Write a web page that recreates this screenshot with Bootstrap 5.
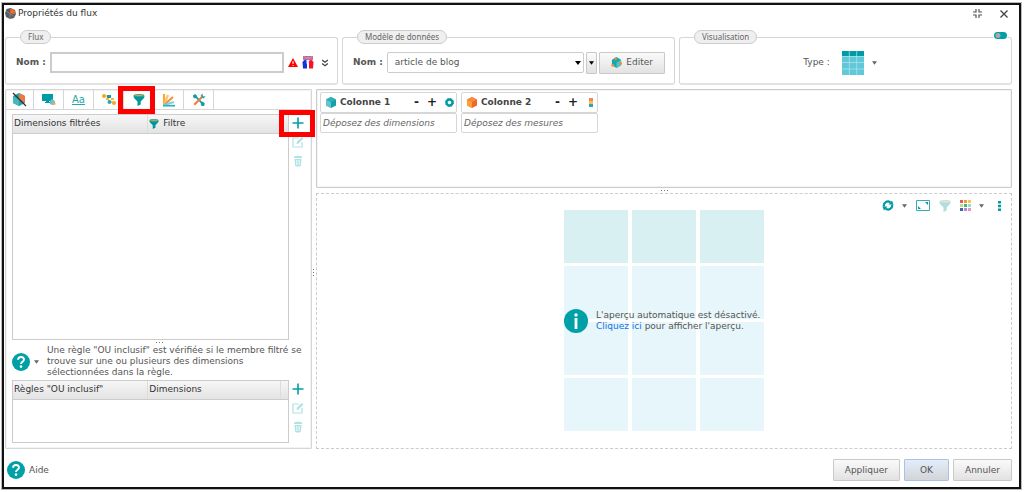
<!DOCTYPE html>
<html lang="fr">
<head>
<meta charset="utf-8">
<meta name="viewport" content="width=device-width, initial-scale=1">
<title>Propriétés du flux</title>
<link rel="stylesheet" href="https://cdn.jsdelivr.net/npm/bootstrap@5.3.0/dist/css/bootstrap.min.css">
<style>
:root{--teal:#00a0a6;--line:#d6d6d6;--ink:#555}
body{font:9px/11px "DejaVu Sans","Liberation Sans",sans-serif;color:var(--ink);background:#fff;padding:3px 3px 3px 2px}
button,input,select{font:inherit;color:inherit}
svg{display:block;flex:none}
a{color:#1473e6;text-decoration:none}
.window{min-height:calc(100vh - 6px);border:2px solid #111;outline:1px solid #bbb;padding:0 7px 6px 1px}
.titlebar{height:17px;padding-right:4px;gap:2px;color:#333}
.plain{border:0;background:none;padding:0;display:flex;align-items:center;justify-content:center}
.groups{display:grid;grid-template-columns:repeat(3,minmax(0,1fr));gap:4px;margin-top:8px}
.group{border:1px solid var(--line);border-bottom:2px solid #e2e2e2;border-radius:3px;padding:0 9px 9px 10px;position:relative;min-width:0}
.group legend{float:none;width:auto;margin:0 0 0 4px;padding:0 7px;height:14px;font:8px/12px "Noto Sans",sans-serif;color:#666;background:#efefef;border:1px solid #ccc;border-radius:7px}
.fields{height:30px;padding-top:7px}
.typed{padding-right:12px}
.field{height:21px;border:1px solid #c4c4c4;border-radius:0;padding:0 7px;background:#fff;min-width:0}
.field.name{border:2px solid #ccc}
.field.model{appearance:none;border-radius:2px;border-color:#ccc;background:#fff url("data:image/svg+xml,%3Csvg xmlns='http://www.w3.org/2000/svg' viewBox='0 0 6 4'%3E%3Cpath d='M0 0h6L3 4z'/%3E%3C/svg%3E") no-repeat right 2px center/6px 4px}
.pushbtn{border:1px solid #c9c9c9;border-radius:1px;background:linear-gradient(#fafafa,#e2e2e2);height:22px;padding:0 11px;display:flex;align-items:center;justify-content:center}
.pushbtn.main{background:linear-gradient(#e3edf9,#d2d5d9);border-color:#a9c3e2}
.pushbtn.more{width:11px;padding:0;margin:0 2px}
.switch{appearance:none;position:absolute;right:4px;top:-12px;width:13px;height:7px;border-radius:4px;margin:0;background:radial-gradient(circle at 4px 50%,#aaa 2px,transparent 3px),var(--teal);box-shadow:0 0 0 1px #fff}
.work{display:grid;grid-template-columns:307px minmax(0,1fr);gap:4px;margin-top:4px;position:relative}
.work>.d-flex{position:relative}
.panel{border:1px solid var(--line);border-radius:1px;box-shadow:inset 0 0 0 1px #f3f3f3}
.tabs{height:20px;border-bottom:1px solid var(--line)}
.tab{width:30px;border-right:1px solid var(--line);position:relative}
.tab:first-child{width:28px}
.sample{font-size:10px;color:#25a7ac}
.marked::after{content:"";position:absolute;z-index:3;border:5px solid red;pointer-events:none}
.tab.marked::after{inset:-4px -2px -5px -6px}
.addrow.marked::after{inset:-5px -8px -6px -10px}
.sidebody{padding:4px 4px 5px 6px}
.box{border:1px solid #ccc;min-width:0}
.box.rules{min-height:63px}
.listing{width:100%;table-layout:fixed;color:#333}
.listing th{height:18px;padding:0 1px;font-weight:400;background:linear-gradient(#f6f6f6,#e3e3e3);border-bottom:1px solid #ccc;border-right:1px solid #dcdcdc}
.listing th:first-child{width:49%}
.listing th.stub{width:8px}
.listing th:last-child{border-right:0}
.tools{width:18px;padding-top:1px;gap:3px}
.tools button{position:relative;height:16px;width:18px}
.off{opacity:.3}
.dots{height:5px;display:flex;gap:2px;align-items:center;justify-content:center}
.dots i{width:1px;height:1px;background:#777}
.dots.side{position:absolute;flex-direction:column;left:-3px;top:50%;height:auto}
.hint{padding-bottom:2px}
.columns{min-height:99px;padding:2px 3px;border-color:#ccc}
.colhead{height:21px;padding:0 2px 0 5px;border:1px solid var(--line);border-radius:2px;font-weight:700;color:#444}
.colhead>.tint{width:9px}
.drop{height:20px;line-height:18px;padding-left:2px;border:1px solid var(--line);border-radius:2px;font-style:italic;color:#666}
.column{width:137px}
.sign{font-size:12px;font-weight:700;color:#222}
.preview{border:1px dashed #ccc;min-height:255px;position:relative}
.viewtools{height:16px;padding:7px 9px 0 0;gap:9px}
.mosaic{display:grid;width:200px;grid-template-columns:repeat(3,1fr);grid-auto-rows:53px;gap:3px 4px;margin:0 auto}
.mosaic span{background:#e6f6fa}
.mosaic span:nth-child(-n+3){background:#d9f0f2}
.note{position:absolute;left:0;right:0;top:115px;width:200px;margin:auto;white-space:nowrap}
.footer{margin-top:10px;padding-left:2px}
.footer .pushbtn{min-width:45px}
</style>
</head>
<body>
<svg width="0" height="0" class="position-absolute" aria-hidden="true"><defs>
<symbol id="plus" viewBox="0 0 12 12"><path d="M6 .5v11M.5 6h11" stroke="#00a0a6" stroke-width="1.600"/></symbol>
<symbol id="edit" viewBox="0 0 12 12"><path d="M7 2H1v9h9V6" fill="none" stroke="#00a0a6" stroke-width="1.200"/><path d="M4.500 8l.5-2.500L10 1l1.500 1.500-5 5z" fill="#00a0a6"/></symbol>
<symbol id="bin" viewBox="0 0 10 12"><path d="M1 1.500q4-1.500 8 0V3H1zM1.500 4h7l-.7 7q-2.800 1.200-5.600 0z" fill="#00a0a6"/><path d="M3.500 5v5M5 5v5M6.500 5v5" stroke="#fff" stroke-width=".6"/></symbol>
<symbol id="funnel" viewBox="0 0 12 12"><path d="M.5 2Q6 3.500 11.500 2q0 1.500-1 2.500L7.700 7.500V10.500L4.500 12V7.500L1.500 4.500Q.5 3.500.5 2z" fill="#00979c"/><ellipse cx="6" cy="1.600" rx="5.200" ry="1.100" fill="#e6ab35" stroke="#00979c" stroke-width=".8"/></symbol>
<symbol id="caret" viewBox="0 0 6 4"><path d="M0 0h6L3 4z" fill="#666"/></symbol>
<symbol id="help" viewBox="0 0 18 18"><circle cx="9" cy="9" r="9" fill="#00a0a6"/><path d="M6 6.800Q6.200 4 9 4t3 2.500C12 8.700 9 8.800 9 11" fill="none" stroke="#fff" stroke-width="1.900"/><circle cx="9" cy="13.600" r="1.300" fill="#fff"/></symbol>
</defs></svg>
<main class="window d-flex flex-column">
  <header class="titlebar d-flex align-items-center">
    <svg width="11" height="11" viewBox="0 0 11 11"><path d="M5.500 0l4.500 2 1 4-2 4-4 1-4-2L0 5l1.500-4z" fill="#595d61"/><path d="M5.500 5.500L5 1l4 .5L10.500 6z" fill="#f36b24"/><path d="M1 3l4 2.500V11M5 5.500l4 3" stroke="#8b8f94" fill="none" stroke-width=".8"/></svg>
    <span class="me-auto">Propriétés du flux</span>
    <button class="plain me-3" aria-label="Réduire"><svg width="9" height="9" viewBox="0 0 9 9"><path d="M3 0v3H0M6 0v3h3M3 9V6H0M6 9V6h3" fill="none" stroke="#555" stroke-width="1.200"/></svg></button>
    <button class="plain" aria-label="Fermer"><svg width="8" height="8" viewBox="0 0 8 8"><path d="M.5.5l7 7M7.500.5l-7 7" stroke="#444" stroke-width="1.300"/></svg></button>
  </header>

  <div class="groups">
    <fieldset class="group"><legend>Flux</legend>
      <div class="fields d-flex align-items-center">
        <label class="fw-bold me-1" for="flowname">Nom :</label>
        <input id="flowname" class="field name flex-grow-1" type="text">
        <svg class="ms-1" width="10" height="9" viewBox="0 0 10 9"><path d="M5 0l5 9H0z" fill="red"/><path d="M5 3v3M5 7v1" stroke="#fff"/></svg>
        <svg class="ms-1" width="12" height="13" viewBox="0 0 12 13"><path d="M1 0h10v4H1z" fill="#6a6fbd"/><path d="M1 0l10 4M11 0L1 4M6 0v4M1 2h10" stroke="#f27f92"/><path d="M.5 6L3 3.500 5 5v7.500H1z" fill="#1234d8"/><path d="M4.500 5L6 4l1.500 1v3L6 6.500 4.500 8z" fill="#e7eaf7"/><path d="M11.500 6L9 3.500 7 5v7.500h4z" fill="#f5142b"/></svg>
        <button class="plain ms-2" aria-label="Plus"><svg width="6" height="8" viewBox="0 0 6 8"><path d="M0 1l3 2.300L6 1M0 4.500l3 2.300 3-2.300" fill="none" stroke="#444" stroke-width="1.300"/></svg></button>
      </div>
    </fieldset>
    <fieldset class="group"><legend>Modèle de données</legend>
      <div class="fields d-flex align-items-center">
        <label class="fw-bold me-1" for="model">Nom :</label>
        <select id="model" class="field model flex-grow-1"><option>article de blog</option></select>
        <button class="pushbtn more" aria-label="Options"><svg width="5" height="4" viewBox="0 0 6 4"><path d="M0 0h6L3 4z"/></svg></button>
        <button class="pushbtn"><svg width="11" height="11" viewBox="0 0 12 12"><path d="M6 0l5 3v6l-5 3-5-3V3z" fill="#1aa6ad"/><path d="M6 6l5-3v6l-5 3z" fill="#4cc3c8"/><g fill="#ef8b32"><circle cx="5" cy="2" r="1.500"/><circle cx="2" cy="9" r="1.500"/><circle cx="10.500" cy="7" r="1.500"/></g></svg><span class="ms-1">Editer</span></button>
      </div>
    </fieldset>
    <fieldset class="group"><legend>Visualisation</legend>
      <input class="switch" type="checkbox" checked aria-label="Aperçu automatique">
      <div class="fields typed d-flex align-items-center justify-content-center">
        <span class="me-2">Type :</span>
        <button class="plain ms-1" aria-label="Type de visualisation"><svg width="22" height="24" viewBox="0 0 22 24"><path fill="#61c8d9" d="M0 0h22v24H0z"/><path fill="#009ca6" d="M0 0h22v5H0z"/><path d="M7.300 0v24M14.700 0v24M0 5.500h22M0 11.500h22M0 18h22" stroke="#b5e6ee" stroke-width=".7"/></svg><svg class="ms-2" width="5" height="4"><use href="#caret"/></svg></button>
      </div>
    </fieldset>
  </div>

  <div class="work flex-grow-1">
    <section class="panel d-flex flex-column">
      <nav class="tabs d-flex">
        <button class="plain tab" aria-label="Général"><svg width="15" height="15" viewBox="0 0 15 15"><path d="M7 1l6 3v7l-6 3-6-3V4z" fill="#1aa3ab"/><path d="M7 1l6 3v7L7 8z" fill="#ee7843"/><path d="M1 4l6 4v6l-6-3z" fill="#45b7be"/><path d="M1 1l13 13" stroke="#333" stroke-width="1.300"/></svg></button>
        <button class="plain tab" aria-label="Affichage"><svg width="14" height="11" viewBox="0 0 14 11"><path d="M0 0h11v7H7v1h2v1H3V8h1V7H0z" fill="#009ca3"/><path d="M10 5l3 2v3l-3 1-2-1V7z" fill="#69bfe0"/><circle cx="12" cy="9.500" r="1.500" fill="#f4a93b"/></svg></button>
        <button class="plain tab" aria-label="Texte"><u class="sample">Aa</u></button>
        <button class="plain tab" aria-label="Liens"><svg width="14" height="11" viewBox="0 0 14 11"><path d="M2 2h6L5 5l3 3h4" stroke="#f4b23d" fill="none"/><circle cx="2" cy="2" r="2" fill="#f4a62a"/><path d="M5 1h4v3H5z" fill="#159ca3"/><path d="M4 4h3v2H4zM9 4h3v2H9z" fill="#f5b53c"/><circle cx="7.500" cy="8" r="2" fill="#2fa7ad"/><circle cx="12" cy="9" r="2" fill="#f4a62a"/></svg></button>
        <button class="plain tab marked" aria-label="Filtres"><svg width="12" height="12"><use href="#funnel"/></svg></button>
        <button class="plain tab" aria-label="Graphiques"><svg width="14" height="14" viewBox="0 0 14 14"><g stroke-width="2.200"><path d="M2 12V1" stroke="#f7a936"/><path d="M2 12L6 2" stroke="#fbc765"/><path d="M2 12L11 4" stroke="#f58a4b"/><path d="M2 12l10-3" stroke="#7bd4dc"/><path d="M1 12.700h12" stroke="#2bb0b8" stroke-width="1.700"/></g></svg></button>
        <button class="plain tab" aria-label="Outils"><svg width="14" height="14" viewBox="0 0 13 13"><path d="M3 3l7 7" stroke="#129ca5" stroke-width="1.600"/><path d="M1 2l2-1 2 2-2 2-2-1M8 10l2-2 2 2-1 2-2 0z" fill="#159ca5"/><path d="M9.500 3.500L2 11" stroke="#f17d45" stroke-width="2"/><path d="M9 4.500L8 2l2-1.500V3h2.500L11 5z" fill="#29a5ae"/></svg></button>
      </nav>
      <div class="sidebody d-flex flex-column flex-grow-1">
        <div class="d-flex flex-grow-1">
          <div class="box flex-grow-1"><table class="listing"><thead><tr><th>Dimensions filtrées</th><th><span class="d-flex align-items-center"><svg class="me-1" width="10" height="10"><use href="#funnel"/></svg>Filtre</span></th></tr></thead></table></div>
          <div class="tools d-flex flex-column">
            <button class="plain addrow marked" aria-label="Ajouter un filtre"><svg width="12" height="12"><use href="#plus"/></svg></button>
            <button class="plain off" aria-label="Modifier le filtre"><svg width="12" height="12"><use href="#edit"/></svg></button>
            <button class="plain off" aria-label="Supprimer le filtre"><svg width="10" height="12"><use href="#bin"/></svg></button>
          </div>
        </div>
        <div class="dots"><i></i><i></i><i></i></div>
        <div class="hint d-flex align-items-center">
          <button class="plain" aria-label="Aide sur les règles"><svg width="18" height="18"><use href="#help"/></svg><svg class="ms-1" width="5" height="4"><use href="#caret"/></svg></button>
          <p class="mb-0 ms-2">Une règle "OU inclusif" est vérifiée si le membre filtré se trouve sur une ou plusieurs des dimensions sélectionnées dans la règle.</p>
        </div>
        <div class="d-flex">
          <div class="box rules flex-grow-1"><table class="listing"><thead><tr><th>Règles "OU inclusif"</th><th>Dimensions</th><th class="stub"></th></tr></thead></table></div>
          <div class="tools d-flex flex-column">
            <button class="plain" aria-label="Ajouter une règle"><svg width="12" height="12"><use href="#plus"/></svg></button>
            <button class="plain off" aria-label="Modifier la règle"><svg width="12" height="12"><use href="#edit"/></svg></button>
            <button class="plain off" aria-label="Supprimer la règle"><svg width="10" height="12"><use href="#bin"/></svg></button>
          </div>
        </div>
      </div>
    </section>

    <section class="d-flex flex-column">
      <div class="dots side"><i></i><i></i><i></i></div>
      <div class="panel columns d-flex align-items-start">
        <div class="column">
          <div class="colhead d-flex align-items-center">
            <svg width="10" height="11" viewBox="0 0 10 11"><path d="M5 0l5 2.500v6L5 11 0 8.500v-6z" fill="#159fa6"/><path d="M0 2.500L5 5v6L0 8.500z" fill="#63c5cf"/><path d="M0 2.500L5 0l5 2.500L5 5z" fill="#30b1b8"/></svg>
            <span class="ms-1 me-auto">Colonne 1</span><button class="plain sign">-</button><button class="plain sign mx-2">+</button>
            <button class="plain tint" aria-label="Options"><svg width="9" height="9" viewBox="0 0 9 9"><circle cx="4.500" cy="4.500" r="3" fill="none" stroke="#009ca3" stroke-width="2.400"/><circle cx="4.500" cy="4.500" r="4" fill="none" stroke="#009ca3" stroke-dasharray="1.600 1.540"/></svg></button>
          </div>
          <div class="drop">Déposez des dimensions</div>
        </div>
        <div class="column ms-1">
          <div class="colhead d-flex align-items-center">
            <svg width="10" height="11" viewBox="0 0 10 11"><path d="M5 0l5 2.500v6L5 11 0 8.500v-6z" fill="#f2652b"/><path d="M0 2.500L5 5v6L0 8.500z" fill="#fba332"/><path d="M0 2.500L5 0l5 2.500L5 5z" fill="#f98941"/></svg>
            <span class="ms-1 me-auto">Colonne 2</span><button class="plain sign">-</button><button class="plain sign mx-2">+</button>
            <button class="plain tint" aria-label="Couleurs"><svg width="4" height="9" viewBox="0 0 4 9"><path fill="#f58458" d="M0 0h4v3H0z"/><path fill="#f9bd51" d="M0 3h4v3H0z"/><path fill="#25a9b0" d="M0 6h4v3H0z"/></svg></button>
          </div>
          <div class="drop">Déposez des mesures</div>
        </div>
      </div>
      <div class="dots"><i></i><i></i><i></i></div>
      <div class="preview flex-grow-1">
        <div class="viewtools d-flex align-items-center justify-content-end">
          <button class="plain" aria-label="Actualiser"><svg width="12" height="11" viewBox="0 0 12 11"><path d="M2 6.500A4 4 0 0 1 8.500 2.500M10 4.500A4 4 0 0 1 3.500 8.500" fill="none" stroke="#009ca3" stroke-width="2.300"/><path d="M6.500 4.500h5L10 .5zM5.500 6.500h-5L2 10.500z" fill="#009ca3"/></svg><svg class="ms-2" width="5" height="4"><use href="#caret"/></svg></button>
          <button class="plain" aria-label="Plein écran"><svg width="14" height="11" viewBox="0 0 14 11"><path d="M.5.5h13v10H.5z" fill="none" stroke="#35adb3"/><path d="M9 2h3v3zM2 6v3h3zM8.500 5L11 3M3 8l2.500-2" fill="#009ca3"/></svg></button>
          <button class="plain off" aria-label="Filtrer"><svg width="12" height="12"><use href="#funnel"/></svg></button>
          <button class="plain me-1" aria-label="Palette"><svg width="11" height="11" viewBox="0 0 11 11"><path fill="#f0554f" d="M0 0h3v3H0z"/><path fill="#f49340" d="M4 0h3v3H4z"/><path fill="#f8c94a" d="M8 0h3v3H8z"/><path fill="#b5dd9b" d="M0 4h3v3H0z"/><path fill="#43bc65" d="M4 4h3v3H4z"/><path fill="#9dd7df" d="M8 4h3v3H8z"/><path fill="#4762a4" d="M0 8h3v3H0z"/><path fill="#b28ad5" d="M4 8h3v3H4z"/><path fill="#ef94b6" d="M8 8h3v3H8z"/></svg><svg class="ms-2" width="5" height="4"><use href="#caret"/></svg></button>
          <button class="plain" aria-label="Menu"><svg width="5" height="10" viewBox="0 0 5 10"><path fill="#009ca3" d="M1 0h3v2.500H1zM1 3.800h3v2.500H1zM1 7.500h3V10H1z"/></svg></button>
        </div>
        <div class="mosaic"><span></span><span></span><span></span><span></span><span></span><span></span><span></span><span></span><span></span><span></span><span></span><span></span></div>
        <div class="note d-flex align-items-center"><svg width="24" height="24" viewBox="0 0 24 24"><circle cx="12" cy="12" r="12" fill="#00a0a6"/><circle cx="12" cy="6" r="1.700" fill="#fff"/><path d="M12 9v11" stroke="#fff" stroke-width="2.800"/></svg><p class="mb-0 ms-2">L'aperçu automatique est désactivé.<br><a href="#">Cliquez ici</a> pour afficher l'aperçu.</p></div>
      </div>
    </section>
  </div>

  <footer class="footer d-flex align-items-center">
    <button class="plain me-auto"><svg width="18" height="18"><use href="#help"/></svg><span class="ms-1">Aide</span></button>
    <div class="d-flex gap-1"><button class="pushbtn">Appliquer</button><button class="pushbtn main">OK</button><button class="pushbtn">Annuler</button></div>
  </footer>
</main>
<script src="https://cdn.jsdelivr.net/npm/bootstrap@5.3.0/dist/js/bootstrap.bundle.min.js"></script>
</body>
</html>
